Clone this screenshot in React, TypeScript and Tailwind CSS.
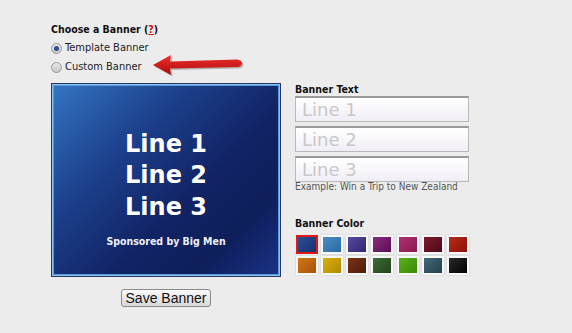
import React from "react";

const swatches: string[][] = [
    ["#2a4f94", "#173070"],
    ["#4b8cc4", "#2a6aa4"],
    ["#5a4aa0", "#2f2770"],
    ["#8a2a80", "#5a0f50"],
    ["#b03070", "#8a1a50"],
    ["#7a1a2e", "#500a18"],
    ["#b82a1a", "#8a1408"],
    ["#d27818", "#a85008"],
    ["#d8b010", "#b08a00"],
    ["#7a3418", "#501a08"],
    ["#3f6a34", "#22441a"],
    ["#58b018", "#3a8a08"],
    ["#456a78", "#22404a"],
    ["#2a2a2a", "#000000"],
];

const Radio = ({ checked }: { checked?: boolean }) => (
    <span className="w-[11px] h-[11px] rounded-full border border-[#9a9a9a] bg-gradient-to-b from-[#e8e8e8] to-[#c8c8c8] flex items-center justify-center">
        {checked && <span className="w-[5px] h-[5px] rounded-full bg-[#2a4f8a]" />}
    </span>
);

const App: React.FC = () => {
    return (
        <div className="relative w-[572px] h-[333px] bg-[#ececec] pl-[51px] pt-[22px] font-['DejaVu_Sans_Condensed','DejaVu_Sans',sans-serif] text-[#111]">
            {/* Header */}
            <div className="text-[10.5px] font-bold leading-[14px]">
                Choose a Banner (<span className="text-[#d01010] underline">?</span>)
            </div>
            <div className="flex flex-col gap-[5px] mt-[5px] text-[11px] leading-[14px] text-[#222]">
                <label className="flex items-center gap-[3px]">
                    <Radio checked /> Template Banner
                </label>
                <label className="flex items-center gap-[3px]">
                    <Radio /> Custom Banner
                </label>
            </div>

            <div className="flex gap-[14px] mt-[9px]">
                {/* Banner preview */}
                <div className="flex flex-col items-center">
                    <div className="w-[230px] h-[194px] border border-[#2a3566] p-[1px] bg-[#86c4ee]">
                        <div className="w-full h-full border border-[#5a9ad8] bg-[linear-gradient(135deg,#3474c2_0%,#1d428e_30%,#112364_60%,#0f1f5c_80%,#1a3284_100%)] flex flex-col items-center justify-center text-white">
                            <div className="text-[24px] font-bold leading-[31.5px] text-center mt-[19px] font-['DejaVu_Sans',sans-serif]">
                                <div>Line 1</div>
                                <div>Line 2</div>
                                <div>Line 3</div>
                            </div>
                            <div className="text-[10.5px] font-bold mt-[11px] text-[#f0f0f8]">Sponsored by Big Men</div>
                        </div>
                    </div>
                    <button className="mt-[12px] w-[90px] h-[18px] rounded-[3px] border border-[#8a8a8a] bg-gradient-to-b from-[#fafafa] to-[#d8d8d8] text-[14px] leading-[16px] font-['Liberation_Sans',sans-serif] text-[#111]">
                        Save Banner
                    </button>
                </div>

                {/* Right column */}
                <div className="flex flex-col">
                    <div className="text-[10.5px] font-bold leading-[14px] -mt-[1px]">Banner Text</div>
                    <div className="flex flex-col gap-[4px] mt-[0px]">
                        {["Line 1", "Line 2", "Line 3"].map((t) => (
                            <div
                                key={t}
                                className="w-[174px] h-[26px] border border-[#b8b8b8] border-t-[2px] border-t-[#9a9a9a] bg-gradient-to-b from-[#ffffff] to-[#f1edf5] px-[6px] flex items-center text-[18px] text-[#c8c8c8] leading-none font-['DejaVu_Sans',sans-serif]"
                            >
                                {t}
                            </div>
                        ))}
                    </div>
                    <div className="text-[10px] text-[#555] -mt-[1px] leading-[12px]">Example: Win a Trip to New Zealand</div>

                    <div className="text-[10.5px] font-bold leading-[14px] mt-[23px]">Banner Color</div>
                    <div className="grid grid-cols-7 gap-x-[1px] gap-y-[0px] mt-[4px] w-[175px]">
                        {swatches.map((c, i) => (
                            <div key={i} className="w-[24px] h-[21px] flex items-center justify-center">
                                <div
                                    className={
                                        i === 0
                                            ? "w-[22px] h-[19px] border-2 border-[#e01818]"
                                            : "w-[22px] h-[19px] border-2 border-[#f8f8f8] shadow-[0_0_2px_rgba(0,0,0,0.15)]"
                                    }
                                >
                                    <div
                                        className="w-full h-full"
                                        style={{ background: `linear-gradient(135deg, ${c[0]}, ${c[1]})` }}
                                    />
                                </div>
                            </div>
                        ))}
                    </div>
                </div>
            </div>

            {/* Red arrow overlay */}
            <svg className="absolute left-[150px] top-[53px]" width="96" height="26" viewBox="0 0 96 26">
                <defs>
                    <linearGradient id="ar" x1="0" y1="0" x2="0" y2="1">
                        <stop offset="0" stopColor="#f03030" />
                        <stop offset="1" stopColor="#b00808" />
                    </linearGradient>
                </defs>
                <path
                    d="M3 12 L21 2 L20 8.5 L87 6.5 Q92 7 92 10.5 Q91 14 87 14 L20 15.5 L21 22 Z"
                    fill="#000"
                    opacity="0.25"
                    transform="translate(1.5,1.5)"
                />
                <path d="M3 12 L21 2 L20 8.5 L87 6.5 Q92 7 92 10.5 Q91 14 87 14 L20 15.5 L21 22 Z" fill="url(#ar)" />
            </svg>
        </div>
    );
};

export default App;
